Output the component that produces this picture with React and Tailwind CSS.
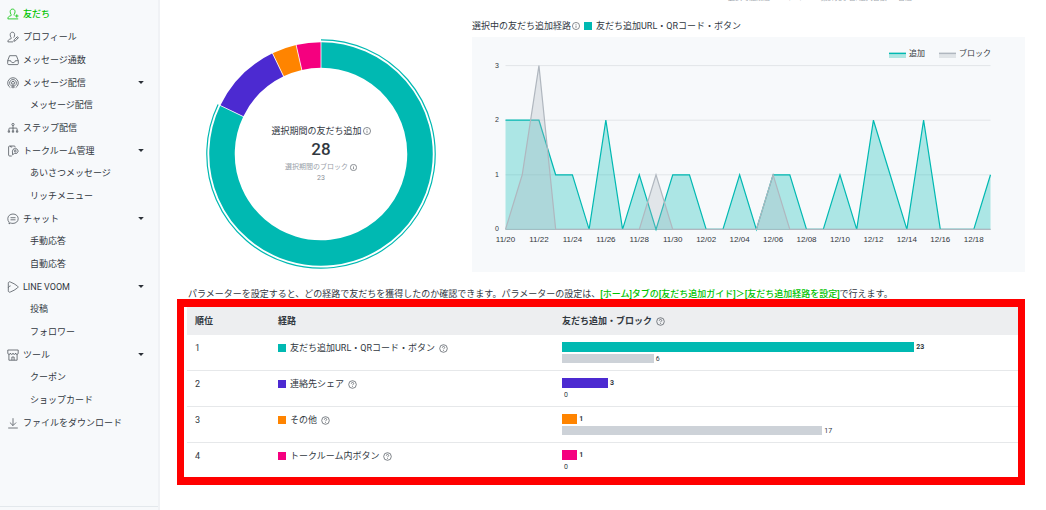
const TEAL = '#00b9b2'
const GRAY = '#cdd2d8'

const nav = [
  { icon: 'friend', label: '友だち', active: true },
  { icon: 'profile', label: 'プロフィール' },
  { icon: 'inbox', label: 'メッセージ通数' },
  { icon: 'broadcast', label: 'メッセージ配信', children: ['メッセージ配信'] },
  { icon: 'step', label: 'ステップ配信' },
  { icon: 'talk', label: 'トークルーム管理', children: ['あいさつメッセージ', 'リッチメニュー'] },
  { icon: 'chat', label: 'チャット', children: ['手動応答', '自動応答'] },
  { icon: 'voom', label: 'LINE VOOM', children: ['投稿', 'フォロワー'] },
  { icon: 'shop', label: 'ツール', children: ['クーポン', 'ショップカード'] },
  { icon: 'download', label: 'ファイルをダウンロード' },
]

const routes = [
  { name: '友だち追加URL・QRコード・ボタン', color: TEAL, added: 23, blocked: 6 },
  { name: '連絡先シェア', color: '#4c2ad1', added: 3, blocked: 0 },
  { name: 'その他', color: '#ff8400', added: 1, blocked: 17 },
  { name: 'トークルーム内ボタン', color: '#f5007f', added: 1, blocked: 0 },
]

const added = [2, 2, 2, 1, 1, 0, 2, 0, 1, 0, 1, 1, 0, 0, 1, 0, 1, 1, 0, 0, 1, 0, 2, 1, 0, 2, 0, 0, 0, 1]
const blocked = [0, 1, 3, 0, 0, 0, 0, 0, 0, 1, 0, 0, 0, 0, 0, 0, 1, 0, 0, 0, 0, 0, 0, 0, 0, 0, 0, 0, 0, 0]
const days = ['11/20', '11/22', '11/24', '11/26', '11/28', '11/30', '12/02', '12/04', '12/06', '12/08', '12/10', '12/12', '12/14', '12/16', '12/18']

const icons = {
  friend: (
    <>
      <path d="M.8 10.900h10.400M.9 10.800c-.1-1.800 1-2.600 3-3.100.5-.2.5-.8.2-1.200C3.400 5.600 3.100 4.600 3.200 3.400 3.300 1.900 4.300 1.100 5.600 1.100S7.900 1.900 8 3.400c.1 1.200-.2 2.200-.9 3.100-.2.400-.2.900.3 1.100" />
      <path d="M9.800 6.300v3.400M8.100 8h3.400" />
    </>
  ),
  profile: (
    <>
      <path d="M6 10.900H.9c-.1-1.800 1-2.600 3-3.100.5-.2.5-.8.2-1.200C3.400 5.700 3.100 4.700 3.200 3.500 3.300 2 4.200 1.200 5.400 1.200S7.500 2 7.600 3.500c.1 1.200-.2 2.200-.9 3.100" />
      <path d="M6.800 10.300l.4-1.500 2.900-2.900c.6-.4 1.500.5 1.100 1.100l-2.900 2.900zM9.500 6.500l1.100 1.100" />
    </>
  ),
  inbox: <path d="M.7 6.600 2.600 1.700h6.800l1.900 4.900v3c0 .6-.4 1-1 1H1.700c-.6 0-1-.4-1-1zM.7 6.700h3c.2 1.300 1.100 1.900 2.300 1.900s2.100-.6 2.300-1.900h3" />,
  broadcast: (
    <>
      <path d="M3.300 10.600a5.300 5.300 0 1 1 5.400 0M4 8.700a3.400 3.400 0 1 1 4 0M4.700 6.900a1.600 1.600 0 1 1 2.600 0" />
      <path d="M6 5.800v5.500M5 7.500v3.400M7 7.500v3.400" />
    </>
  ),
  step: (
    <>
      <circle cx="6" cy="2.500" r="1.100" />
      <path d="M6 3.600v5.200M1.900 8.600V6.900c0-.5.300-.8.800-.8h6.600c.5 0 .8.300.8.800v1.700" />
      <path d="M1.200 8.800h1.400v1.400H1.200zM5.300 8.800h1.400v1.400H5.300zM9.400 8.800h1.400v1.400H9.400z" />
    </>
  ),
  talk: (
    <>
      <path d="M8.200 2.500V2c0-.6-.4-1-1-1H2.600c-.6 0-1 .4-1 1v8c0 .6.400 1 1 1h2.200M3.200 1.100l.5.900h1.500" />
      <path d="m5.400 6.100 1.200-2.300h3.200l1.500 2.300-1.500 2.300H7.300l-1.700 1.500z" />
      <circle cx="8.300" cy="6.100" r=".9" />
    </>
  ),
  chat: <path d="M2 10.900l.2-1.600A4.900 4.900 0 0 1 .8 5.700C.8 3 3.100 1 6 1s5.200 2 5.200 4.700-2.300 4.700-5.200 4.700c-.9 0-1.700-.1-2.400-.4zM3.500 4.700h5M3.500 6.800h5" />,
  voom: <path d="M1.300 6.800V2.200C1.300 1 2.300.5 3.300 1c2.700 1 5 2.300 7.200 4.100.8.600.8 1.200 0 1.800-2.200 1.800-4.500 3.100-7.200 4.100-1 .5-2 0-2-1.200V6.800c.3-1 1-1.600 2.300-1.900" />,
  shop: <path d="M.8 1h10.400v3.200c0 .7-.5 1.200-1.300 1.200S8.600 4.900 8.600 4.200c0 .7-.5 1.200-1.300 1.200S6 4.900 6 4.200c0 .7-.5 1.200-1.300 1.200s-1.300-.5-1.300-1.200c0 .7-.5 1.200-1.300 1.200S.8 4.900.8 4.200zM1.900 5.400v5.800h8.200V5.400M4.900 11.200V8h2.200v3.200" />,
  download: <path d="M1.200 11h9.600M6 1.200v7.300M2.900 5.500 6 8.600l3.100-3.100" />,
}

function NavIcon({ name, active }) {
  return (
    <svg className={active ? 'size-3 shrink-0' : 'size-3 shrink-0 text-[#50575e]'} viewBox="0 0 12 12" fill="none" stroke="currentColor" strokeWidth="0.8" aria-hidden="true">
      {icons[name]}
    </svg>
  )
}

function InfoIcon({ small }) {
  return (
    <svg className={small ? 'size-[7px] shrink-0 text-[#4a5159]' : 'size-2 shrink-0 text-[#5a6168]'} viewBox="0 0 9 9" fill="none" stroke="currentColor" strokeWidth="0.8" aria-hidden="true">
      <circle cx="4.500" cy="4.500" r="4" />
      <path d="M4.500 4v2.600M4.500 2.400v.9" />
    </svg>
  )
}

function HelpIcon() {
  return (
    <svg className="size-[9px] shrink-0 text-[#4a5159]" viewBox="0 0 9 9" fill="none" stroke="currentColor" strokeWidth="0.7" aria-hidden="true">
      <circle cx="4.500" cy="4.500" r="3.800" />
      <path d="M3.300 3.700c0-.8.500-1.300 1.200-1.300s1.200.5 1.200 1.100c0 .9-1.200.9-1.200 1.800M4.500 6v.8" />
    </svg>
  )
}

function Sidebar() {
  return (
    <aside className="flex w-[160px] shrink-0 flex-col border-r-2 border-[#f0f2f5] bg-[#f7f9fb]">
      <nav className="pt-[2px]">
        <ul>
          {nav.map(item => (
            <li key={item.label}>
              {item.children ? (
                <button type="button" aria-expanded="true" className="flex h-[23px] w-full items-center gap-1 pr-[14px] pl-[7px] text-left">
                  <NavIcon name={item.icon} />
                  <span className="flex-1">{item.label}</span>
                  <svg className="h-[3px] w-[6px]" viewBox="0 0 6 3" fill="#2b3138" aria-hidden="true"><path d="M.2 0h5.600L3 3z" /></svg>
                </button>
              ) : (
                <a href="#" className={item.active ? 'flex h-[23px] items-center gap-1 pl-[7px] font-medium text-[#00c300]' : 'flex h-[23px] items-center gap-1 pl-[7px]'}>
                  <NavIcon name={item.icon} active={item.active} />
                  {item.label}
                </a>
              )}
              {item.children && (
                <ul className="flex flex-col gap-px">
                  {item.children.map(child => (
                    <li key={child}>
                      <a href="#" className="flex h-[22px] items-center pl-[30px]">{child}</a>
                    </li>
                  ))}
                </ul>
              )}
            </li>
          ))}
        </ul>
      </nav>
      <div className="mt-auto h-1 border-t border-[#e3e8ec]" />
    </aside>
  )
}

const point = (r, turn) => {
  const a = turn * 2 * Math.PI
  return `${115 + r * Math.sin(a)} ${115 - r * Math.cos(a)}`
}

const arc = (r, from, to) =>
  `M${point(r, from)} A${r} ${r} 0 ${to - from > 0.5 ? 1 : 0} 1 ${point(r, to)}`

function Donut() {
  const total = routes.reduce((sum, r) => sum + r.added, 0)
  let start = 0
  const slices = routes.map(r => {
    const from = start
    start += r.added / total
    return { ...r, from, to: start }
  })

  return (
    <div className="relative size-[230px]">
      <svg className="size-full" viewBox="0 0 230 230" fill="none" aria-hidden="true">
        {slices.map(s => (
          <path key={s.name} d={arc(99, s.from, s.to)} stroke={s.color} strokeWidth="25.500" />
        ))}
        {slices.map(s => (
          <path key={s.name} d={`M${point(85, s.from)} L${point(112.5, s.from)}`} stroke="#fff" strokeWidth="0.8" />
        ))}
        <path d={arc(114.2, slices[0].from, slices[0].to)} stroke={TEAL} strokeWidth="1.200" />
      </svg>
      <div className="absolute inset-0 flex flex-col items-center pt-[86px]">
        <p className="flex items-center gap-px leading-3">選択期間の友だち追加 <InfoIcon /></p>
        <p className="text-[17px] leading-6 font-medium">{total}</p>
        <p className="flex items-center gap-[2px] text-[7px] leading-3 text-[#9aa1a9]">選択期間のブロック <InfoIcon small /></p>
        <p className="text-[7px] leading-[10px] text-[#8a9199]">23</p>
      </div>
    </div>
  )
}

const x = i => 33.5 + i * 16.724
const y = v => 192.4 - v * 54.6
const line = data => data.map((v, i) => `${x(i)},${y(v)}`).join(' ')
const area = data => `${x(0)},${y(0)} ${line(data)} ${x(data.length - 1)},${y(0)}`

function Chart() {
  return (
    <div className="bg-[#f7f9fb]">
      <svg className="block w-full" viewBox="0 0 553 235" role="img" aria-label="友だち追加とブロックの推移">
        <g fill="#33383d" className="font-['Liberation_Sans','Noto_Sans_CJK_JP',sans-serif]">
          <rect x="417" y="15" width="17" height="6" fill="#ade6e2" />
          <path d="M417 16.500h17" stroke={TEAL} strokeWidth="1.200" />
          <text x="437" y="19" fontSize="8">追加</text>
          <rect x="467" y="15" width="17" height="6" fill="#e0e4e7" />
          <path d="M467 16.500h17" stroke="#b0b7bf" strokeWidth="1.200" />
          <text x="487" y="19" fontSize="8">ブロック</text>
          {[0, 1, 2, 3].map(v => (
            <g key={v}>
              <path d={`M${x(0)} ${y(v)}H${x(29)}`} stroke={v ? '#e2e5e8' : '#b4bac0'} strokeWidth="1" />
              <text x="27" y={y(v) + 2} fontSize="7" textAnchor="end">{v}</text>
            </g>
          ))}
          {days.map((d, i) => (
            <text key={d} x={x(i * 2)} y="205" fontSize="8" textAnchor="middle">{d}</text>
          ))}
        </g>
        <polygon points={area(added)} fill={TEAL} fillOpacity="0.3" />
        <polyline points={line(added)} fill="none" stroke={TEAL} strokeWidth="1.200" />
        <polygon points={area(blocked)} fill="#b0b7bf" fillOpacity="0.3" />
        <polyline points={line(blocked)} fill="none" stroke="#b0b7bf" strokeWidth="1.200" />
      </svg>
    </div>
  )
}

function Swatch({ color }) {
  return <span className="size-2 shrink-0" style={{ background: color }} />
}

function RouteTable() {
  const max = Math.max(...routes.map(r => r.added))
  const width = v => ({ width: `${(v / max) * 78.6}%` })

  return (
    <div className="border-x-[7px] border-y-8 border-[#ff0000] pl-[3px]">
      <table className="w-full table-fixed border-separate border-spacing-0 text-left">
        <thead className="bg-[#edeef0]">
          <tr className="h-7">
            <th className="w-[83px] px-2 font-bold">順位</th>
            <th className="w-[284px] px-2 font-bold">経路</th>
            <th className="px-2 font-bold">
              <span className="flex items-center gap-1">友だち追加・ブロック <HelpIcon /></span>
            </th>
          </tr>
        </thead>
        <tbody>
          {routes.map((r, i) => (
            <tr key={r.name} className="h-9 align-top last:h-[34px] *:border-b *:border-[#e6e8ea] *:px-2 *:pt-[7px] last:*:border-0">
              <td>{i + 1}</td>
              <td>
                <span className="flex items-center gap-1">
                  <Swatch color={r.color} />
                  {r.name} <HelpIcon />
                </span>
              </td>
              <td>
                <div className="flex h-[10px] items-center gap-[2px] text-[7px] font-bold">
                  <span className="h-full" style={{ ...width(r.added), background: r.color }} />
                  {r.added}
                </div>
                <div className="mt-[2px] flex h-[9px] items-center gap-[2px] text-[7px]">
                  <span className="h-full" style={{ ...width(r.blocked), background: GRAY }} />
                  {r.blocked}
                </div>
              </td>
            </tr>
          ))}
        </tbody>
      </table>
    </div>
  )
}

export default function App() {
  return (
    <div className="flex min-h-screen bg-white font-[Roboto,'Noto_Sans_CJK_JP',sans-serif] text-[9px] leading-3 text-[#31383f]" lang="ja">
      <Sidebar />
      <main className="min-w-0 flex-1 pr-[21px] pl-[17px]">
        <div className="flex h-[3px] items-end gap-[10px] overflow-hidden pl-[551px] text-[7px] leading-[9px] whitespace-nowrap text-[#a3a9af]">
          <span>選択可能期間: 2020/06/18</span>
          <span>集計完了日, 最大日数: 90日間</span>
        </div>
        <div className="flex">
          <div className="flex w-[295px] shrink-0 justify-center pt-9 pr-[7px]">
            <Donut />
          </div>
          <div className="min-w-0 flex-1 pt-[17px]">
            <h2 className="mb-[5px] flex items-center gap-1">
              <span className="flex items-center gap-px">選択中の友だち追加経路 <InfoIcon /></span>
              <Swatch color={TEAL} />
              友だち追加URL・QRコード・ボタン
            </h2>
            <Chart />
          </div>
        </div>
        <p className="mt-[17px] pl-[11px] leading-[10px]">
          パラメーターを設定すると、どの経路で友だちを獲得したのか確認できます。パラメーターの設定は、<a href="#" className="font-medium text-[#00c300]">[ホーム]タブの[友だち追加ガイド]＞[友だち追加経路を設定]</a>で行えます。
        </p>
        <RouteTable />
      </main>
    </div>
  )
}
